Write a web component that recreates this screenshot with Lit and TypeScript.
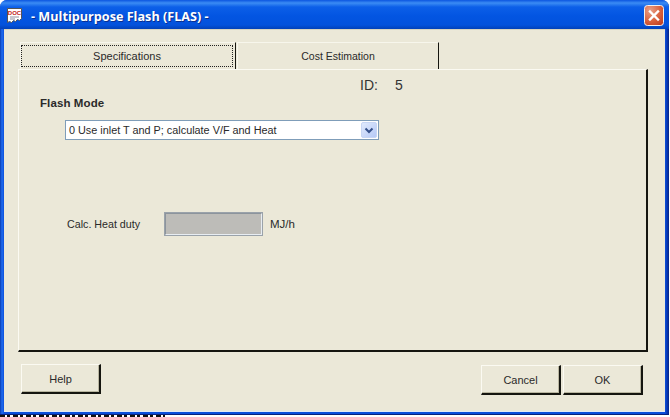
import { LitElement, html, css } from "lit";
import { customElement } from "lit/decorators.js";

@customElement("app-root")
export class AppRoot extends LitElement {
  static styles = css`
    :host {
      display: block;
      width: 670px;
      height: 417px;
      background: #fff;
      font-family: "Liberation Sans", Arial, sans-serif;
      font-size: 11px;
      color: #2a2a2a;
      overflow: hidden;
    }
    .win {
      width: 669px;
      height: 415px;
      box-sizing: border-box;
      display: flex;
      flex-direction: column;
      border-radius: 7px 7px 0 0;
      background: linear-gradient(90deg, #0a3bb0 0, #1f6cf0 2px, #0b4fdb 4px, #0b4fdb 665px, #0638b8 667px, #06227e 669px);
      box-shadow: inset 0 -1px #06227e;
    }
    .title {
      height: 29px;
      flex: none;
      box-sizing: border-box;
      display: flex;
      align-items: center;
      padding: 2px 5px 0 6px;
      gap: 8px;
      border-radius: 7px 7px 0 0;
      background: linear-gradient(180deg, #0b55e0 0, #3b8cf4 3px, #0c5fe8 7px, #0355e2 16px, #0352dc 25px, #0241b8 29px);
    }
    .title svg { flex: none; display: block; }
    .caption {
      flex: 1;
      color: #fff;
      font-family: "Open Sans", "Liberation Sans", sans-serif;
      font-weight: 700;
      font-size: 12.65px;
      text-shadow: 1px 1px #0a2f90;
      white-space: nowrap;
    }
    .close {
      flex: none;
      width: 20px;
      height: 21px;
      display: block;
      margin-top: -1px;
    }
    .client {
      flex: 1;
      min-height: 0;
      margin: 0 4px 3px 4px;
      background: #ebe8d8;
      box-sizing: border-box;
      padding: 13px 18px 0 14px;
      display: flex;
      flex-direction: column;
      box-shadow: inset 0 1px #d8d4c0, inset 0 -1px #e4ebf4;
    }
    .tabs {
      display: flex;
      height: 27px;
      padding-left: 2px;
      flex: none;
    }
    .tab {
      box-sizing: border-box;
      height: 28px;
      display: flex;
      align-items: center;
      justify-content: center;
      border-top: 1px solid #f7f6ec;
      border-left: 1px solid #f7f6ec;
      border-right: 1px solid #15150f;
      padding-bottom: 2px;
      font-size: 10.5px;
    }
    .tab.first { width: 216px; padding: 0 2px 2px 0; }
    .tab.second { width: 202px; margin-left: 1px; }
    .focus {
      width: 212px;
      height: 22px;
      box-sizing: border-box;
      border: 1px dotted #222;
      display: flex;
      align-items: center;
      justify-content: center;
      font-size: 11px;
    }
    .panel {
      width: 630px;
      height: 283px;
      flex: none;
      box-sizing: border-box;
      border-top: 1px solid #fbfaf2;
      border-left: 1px solid #fbfaf2;
      border-right: 2px solid #15150f;
      border-bottom: 2px solid #15150f;
      display: flex;
      flex-direction: column;
    }
    .id {
      display: flex;
      font-size: 14px;
      padding: 7px 0 0 341px;
      height: 17px;
      line-height: 17px;
      color: #333;
    }
    .id span:first-child { width: 35px; }
    .mode {
      font-weight: 700;
      font-size: 11.5px;
      margin: 2px 0 0 21px;
      height: 14px;
      line-height: 14px;
      letter-spacing: 0.1px;
    }
    .combo {
      margin: 10px 0 0 46px;
      width: 314px;
      height: 20px;
      box-sizing: border-box;
      border: 1px solid #7f9db9;
      background: #fff;
      display: flex;
      align-items: center;
      padding: 0 1px 0 3px;
      font-size: 10.85px;
    }
    .combo .val { flex: 1; white-space: nowrap; }
    .arrow {
      width: 16px;
      height: 16px;
      display: block;
      flex: none;
    }
    .duty {
      display: flex;
      align-items: center;
      margin: 72px 0 0 48px;
      font-size: 10.7px;
    }
    .duty .lbl { width: 97px; }
    .box {
      width: 99px;
      height: 24px;
      box-sizing: border-box;
      background: #bdbcb8;
      border: 2px solid;
      border-color: #8c949c #e8edf2 #e8edf2 #8c949c;
      outline: 1px solid #9aa2aa;
      outline-offset: -1px;
    }
    .duty .unit { margin-left: 7px; font-size: 11.5px; }
    .buttons {
      display: flex;
      padding: 12px 0 0 3px;
      gap: 2px;
    }
    .btn {
      box-sizing: border-box;
      width: 80px;
      height: 30px;
      display: flex;
      align-items: center;
      justify-content: center;
      border-top: 1px solid #fbfaf2;
      border-left: 1px solid #fbfaf2;
      border-right: 2px solid #15150f;
      border-bottom: 2px solid #15150f;
      box-shadow: inset -1px -1px #b9b6a0;
      font-size: 11px;
    }
    .spacer { flex: 1; }
    .low { margin-top: 1px; }
    .last { margin-right: 4px; }
    .scraps {
      width: 165px;
      height: 2px;
      background: repeating-linear-gradient(90deg, #111 0 5px, #fff 5px 7px, #111 7px 10px, #fff 10px 13px);
    }
  `;

  render() {
    return html`
      <div class="win">
        <div class="title">
          <svg width="17" height="17" viewBox="0 0 17 17">
            <path d="M1.5 1.5h14v10l-2 2-2-1-2 2-2-1-2 2-2-1-2 1z" fill="#fff" stroke="#555" stroke-width="1"/>
            <text x="8.5" y="7.5" text-anchor="middle" font-family="Liberation Sans, sans-serif" font-size="6" font-weight="700" fill="#c01818">DOC</text>
            <path d="M4 10h9M4 12h5" stroke="#9090a0" stroke-width="1"/>
          </svg>
          <span class="caption">- Multipurpose Flash (FLAS) -</span>
          <svg class="close" viewBox="0 0 20 21">
            <defs>
              <radialGradient id="cg" cx="0.3" cy="0.25" r="1">
                <stop offset="0" stop-color="#e8a088"/>
                <stop offset="0.55" stop-color="#d9603c"/>
                <stop offset="1" stop-color="#b8381c"/>
              </radialGradient>
            </defs>
            <rect x="0.5" y="0.5" width="19" height="20" rx="3" fill="url(#cg)" stroke="#f4f0ee"/>
            <path d="M6 6.5l8 8M14 6.5l-8 8" stroke="#fff" stroke-width="2.4" stroke-linecap="square"/>
          </svg>
        </div>
        <div class="client">
          <div class="tabs">
            <div class="tab first"><div class="focus">Specifications</div></div>
            <div class="tab second">Cost Estimation</div>
          </div>
          <div class="panel">
            <div class="id"><span>ID:</span><span>5</span></div>
            <div class="mode">Flash Mode</div>
            <div class="combo">
              <span class="val">0 Use inlet T and P; calculate V/F and Heat</span>
              <svg class="arrow" viewBox="0 0 16 16">
                <defs>
                  <linearGradient id="ag" x1="0" y1="0" x2="1" y2="1">
                    <stop offset="0" stop-color="#e2ebfd"/>
                    <stop offset="1" stop-color="#b4c8f6"/>
                  </linearGradient>
                </defs>
                <rect x="0.5" y="0.5" width="15" height="15" rx="1.5" fill="url(#ag)" stroke="#c8d6f4"/>
                <path d="M4.5 6.5L8 10l3.5-3.5" fill="none" stroke="#35508a" stroke-width="2"/>
              </svg>
            </div>
            <div class="duty">
              <span class="lbl">Calc. Heat duty</span>
              <div class="box"></div>
              <span class="unit">MJ/h</span>
            </div>
          </div>
          <div class="buttons">
            <div class="btn">Help</div>
            <div class="spacer"></div>
            <div class="btn low">Cancel</div>
            <div class="btn low last">OK</div>
          </div>
        </div>
      </div>
      <div class="scraps"></div>
    `;
  }
}
